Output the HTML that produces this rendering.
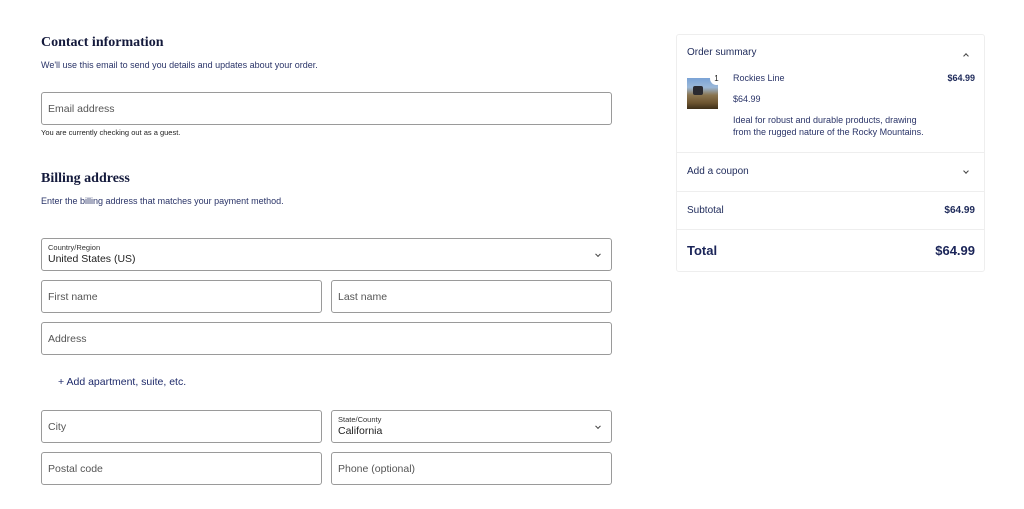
<!DOCTYPE html>
<html><head><meta charset="utf-8"><style>
*{box-sizing:border-box;margin:0;padding:0}
body{width:1024px;height:509px;background:#fff;font-family:"Liberation Sans",sans-serif;color:#1e2a5a;position:relative;overflow:hidden}
.a{position:absolute;white-space:nowrap}
h2{position:absolute;font-family:"Liberation Serif",serif;font-weight:bold;font-size:14px;color:#141a3c}
.sm{font-size:9px;color:#2a3468}
.in{position:absolute;border:1px solid #9a9a9a;border-radius:3px;background:#fff;font-size:10.5px;color:#555}
.in span{position:absolute;left:6px;top:50%;transform:translateY(-50%)}
.in .lb{font-size:7.5px;top:4px;transform:none;color:#333}
.in .v{top:auto;bottom:5px;transform:none;color:#222;font-size:10.5px}
.chev{position:absolute;right:11px;top:50%;width:4px;height:4px;border-right:1px solid #444;border-bottom:1px solid #444;transform:translateY(-70%) rotate(45deg)}
.panel{position:absolute;left:676px;top:34px;width:309px;height:238px;border:1px solid #eee;border-radius:3px}
.hr{position:absolute;left:677px;width:307px;height:1px;background:#eee}
.r{font-size:10px;color:#1e2a5a}
</style></head><body>
<h2 style="left:41px;top:35px">Contact information</h2>
<div class="a sm" style="left:41px;top:60px">We'll use this email to send you details and updates about your order.</div>
<div class="in" style="left:41px;top:92px;width:571px;height:33px"><span>Email address</span></div>
<div class="a" style="left:41px;top:128px;font-size:7.5px;color:#222">You are currently checking out as a guest.</div>
<h2 style="left:41px;top:171px">Billing address</h2>
<div class="a sm" style="left:41px;top:196px">Enter the billing address that matches your payment method.</div>
<div class="in" style="left:41px;top:238px;width:571px;height:33px"><span class="lb">Country/Region</span><span class="v">United States (US)</span><i class="chev"></i></div>
<div class="in" style="left:41px;top:280px;width:281px;height:33px"><span>First name</span></div>
<div class="in" style="left:331px;top:280px;width:281px;height:33px"><span>Last name</span></div>
<div class="in" style="left:41px;top:322px;width:571px;height:33px"><span>Address</span></div>
<div class="a" style="left:58px;top:376px;font-size:10.5px;color:#1e2a6a">+ Add apartment, suite, etc.</div>
<div class="in" style="left:41px;top:410px;width:281px;height:33px"><span>City</span></div>
<div class="in" style="left:331px;top:410px;width:281px;height:33px"><span class="lb">State/County</span><span class="v">California</span><i class="chev"></i></div>
<div class="in" style="left:41px;top:452px;width:281px;height:33px"><span>Postal code</span></div>
<div class="in" style="left:331px;top:452px;width:281px;height:33px"><span>Phone (optional)</span></div>

<div class="panel"></div>
<div class="a r" style="left:687px;top:47px">Order summary</div>
<div class="a" style="left:964px;top:54px;width:4px;height:4px;border-left:1px solid #444;border-top:1px solid #444;transform:rotate(45deg)"></div>
<div class="a" style="left:687px;top:78px;width:31px;height:31px;background:linear-gradient(180deg,#7aa3d6 0%,#9bb8d8 30%,#8a7550 55%,#6d5530 80%,#3d2e18 100%)"></div>
<div class="a" style="left:693px;top:86px;width:10px;height:9px;background:#2a2a30;border-radius:2px"></div>
<div class="a" style="left:710px;top:72px;width:13px;height:13px;border-radius:50%;background:#fff;font-size:8px;text-align:center;line-height:13px;color:#222">1</div>
<div class="a" style="left:733px;top:73px;font-size:9px;color:#2a3468">Rockies Line</div>
<div class="a" style="right:49px;top:73px;font-size:9px;font-weight:bold;color:#1e2a5a">$64.99</div>
<div class="a" style="left:733px;top:94px;font-size:9px;color:#2a3468">$64.99</div>
<div class="a" style="left:733px;top:114px;font-size:9px;line-height:12px;color:#2a3468">Ideal for robust and durable products, drawing<br>from the rugged nature of the Rocky Mountains.</div>
<div class="hr" style="top:152px"></div>
<div class="a r" style="left:687px;top:166px">Add a coupon</div>
<div class="a" style="left:964px;top:169px;width:4px;height:4px;border-right:1px solid #444;border-bottom:1px solid #444;transform:rotate(45deg)"></div>
<div class="hr" style="top:191px"></div>
<div class="a r" style="left:687px;top:205px">Subtotal</div>
<div class="a" style="right:49px;top:205px;font-size:10px;font-weight:bold">$64.99</div>
<div class="hr" style="top:229px"></div>
<div class="a" style="left:687px;top:243px;font-size:13px;font-weight:bold;color:#1a2458">Total</div>
<div class="a" style="right:49px;top:243px;font-size:13px;font-weight:bold;color:#1a2458">$64.99</div>
</body></html>
